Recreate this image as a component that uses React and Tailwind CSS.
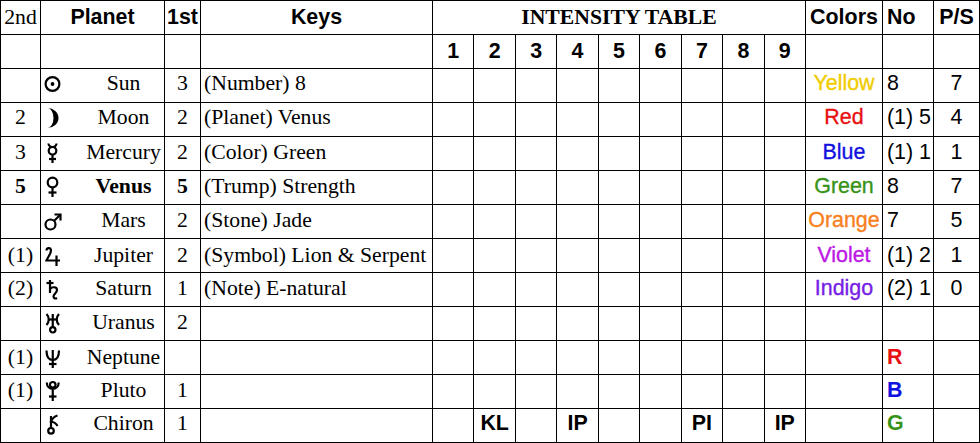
import React from "react";

const serif = "font-['Liberation_Serif','Times_New_Roman',serif] text-[21.7px]";
const sans = "font-['Liberation_Sans',Arial,sans-serif] text-[21.4px]";

const sw = 2.2;

function Glyph({ name }) {
  const common = { fill: "none", stroke: "black", strokeWidth: sw };
  let content = null;
  switch (name) {
    case "sun":
      content = (
        <>
          <circle cx="9.5" cy="11" r="6.9" {...common} />
          <circle cx="9.5" cy="11" r="1.9" fill="black" />
        </>
      );
      break;
    case "moon":
      content = <path d="M4.5 1 A11 10 0 0 1 4.5 21 A6 10 0 0 0 4.5 1 Z" fill="black" />;
      break;
    case "mercury":
      content = (
        <g {...common}>
          <path d="M5.5 1.5 A4 3.5 0 0 0 13.5 1.5" />
          <circle cx="9.5" cy="8.8" r="3.8" />
          <path d="M9.5 12.6 V21" />
          <path d="M6 17 H13" />
        </g>
      );
      break;
    case "venus":
      content = (
        <g {...common}>
          <circle cx="9.5" cy="6.5" r="4.8" />
          <path d="M9.5 11.3 V21" />
          <path d="M5.5 16.5 H13.5" />
        </g>
      );
      break;
    case "mars":
      content = (
        <g {...common}>
          <circle cx="7.5" cy="14.5" r="5" />
          <path d="M11 11 L17 5" />
          <path d="M11.5 4.5 H17.5 V10.5" />
        </g>
      );
      break;
    case "jupiter":
      content = (
        <g {...common}>
          <path d="M3.5 5.5 C3.5 2.5 8 2 8 5.5 C8 8.5 5 12 3.5 15.5 H17" />
          <path d="M13.5 10.5 V21" />
        </g>
      );
      break;
    case "saturn":
      content = (
        <g {...common}>
          <path d="M7 2 V15" />
          <path d="M3.5 5 H10.5" />
          <path d="M7 11 C9 8.5 14 8.5 14 12 C14 15 10.5 16 10.5 18.5 C10.5 20.5 12.5 21 14 20" />
        </g>
      );
      break;
    case "uranus":
      content = (
        <g {...common}>
          <path d="M3.5 2 C6.5 5 6.5 10 3.5 13" />
          <path d="M16 2 C13 5 13 10 16 13" />
          <path d="M5.5 7.5 H14" />
          <path d="M9.75 2 V15" />
          <circle cx="9.75" cy="17.8" r="2.7" />
        </g>
      );
      break;
    case "neptune":
      content = (
        <g {...common}>
          <path d="M3.5 3.5 C3.5 11 6 13 9.75 13 C13.5 13 16 11 16 3.5" />
          <path d="M9.75 3 V21" />
          <path d="M6 17 H13.5" />
        </g>
      );
      break;
    case "pluto":
      content = (
        <g {...common}>
          <circle cx="9.75" cy="4.8" r="2.8" />
          <path d="M3.8 2.5 C3.8 11 15.7 11 15.7 2.5" />
          <path d="M9.75 10 V21" />
          <path d="M6 16.5 H13.5" />
        </g>
      );
      break;
    case "chiron":
      content = (
        <g {...common}>
          <path d="M8 3 V14.5" />
          <path d="M14.5 2.5 C11 3.5 9 6 8 8.5 C11 9 13.5 11 14.5 13" />
          <circle cx="8" cy="17.8" r="2.8" />
        </g>
      );
      break;
    default:
      content = null;
  }
  return (
    <svg width="20" height="22" viewBox="0 0 20 22">
      {content}
    </svg>
  );
}

const rows = [
  { s: "", g: "sun", n: "Sun", f: "3", k: "(Number) 8", c: "Yellow", cc: "text-[#f0cc00]", no: "8", ps: "7", pad: "pb-[3px]" },
  { s: "2", g: "moon", n: "Moon", f: "2", k: "(Planet) Venus", c: "Red", cc: "text-[#e81010]", no: "(1) 5", ps: "4", pad: "pb-[3px]" },
  { s: "3", g: "mercury", n: "Mercury", f: "2", k: "(Color) Green", c: "Blue", cc: "text-[#1010e0]", no: "(1) 1", ps: "1", pad: "pb-[2px]" },
  { s: "5", g: "venus", n: "Venus", f: "5", k: "(Trump) Strength", c: "Green", cc: "text-[#379318]", no: "8", ps: "7", b: true, pad: "pb-[2px]" },
  { s: "", g: "mars", n: "Mars", f: "2", k: "(Stone) Jade", c: "Orange", cc: "text-[#f7801c]", no: "7", ps: "5", pad: "pb-[2px]" },
  { s: "(1)", g: "jupiter", n: "Jupiter", f: "2", k: "(Symbol) Lion & Serpent", c: "Violet", cc: "text-[#bc18e4]", no: "(1) 2", ps: "1", pad: "pt-[1px]" },
  { s: "(2)", g: "saturn", n: "Saturn", f: "1", k: "(Note) E-natural", c: "Indigo", cc: "text-[#771ee4]", no: "(2) 1", ps: "0", pad: "pb-[1px]" },
  { s: "", g: "uranus", n: "Uranus", f: "2", k: "", c: "", cc: "", no: "", ps: "", pad: "pb-[1px]" },
  { s: "(1)", g: "neptune", n: "Neptune", f: "", k: "", c: "", cc: "", no: "R", noc: "text-[#e81010] font-bold", ps: "", pad: "pt-[1px]" },
  { s: "(1)", g: "pluto", n: "Pluto", f: "1", k: "", c: "", cc: "", no: "B", noc: "text-[#1010e0] font-bold", ps: "", pad: "pb-[2px]" },
  { s: "", g: "chiron", n: "Chiron", f: "1", k: "", c: "", cc: "", no: "G", noc: "text-[#379318] font-bold", ps: "", marks: { 2: "KL", 4: "IP", 7: "PI", 9: "IP" }, pad: "pb-[4px]" },
];

const cell = "bg-white flex items-center leading-none";

export default function App() {
  const nums = [1, 2, 3, 4, 5, 6, 7, 8, 9];
  return (
    <div className="w-[980px] h-[443px] bg-white text-black">
      <div className="grid w-[980px] bg-black p-px gap-px grid-cols-[39px_123px_35px_231px_repeat(9,1fr)_76px_50px_45px] grid-rows-[repeat(13,33px)]">
        {/* header row */}
        <div className={`${cell} ${serif} justify-center`}>2nd</div>
        <div className={`${cell} ${sans} font-bold justify-center`}>Planet</div>
        <div className={`${cell} ${sans} font-bold justify-center`}>1st</div>
        <div className={`${cell} ${sans} font-bold justify-center`}>Keys</div>
        <div className={`${cell} ${serif} font-bold justify-center col-span-9`}>INTENSITY TABLE</div>
        <div className={`${cell} ${sans} font-bold justify-center`}>Colors</div>
        <div className={`${cell} ${sans} font-bold pl-[4px]`}>No</div>
        <div className={`${cell} ${sans} font-bold justify-center`}>P/S</div>

        {/* number row */}
        <div className={cell}></div>
        <div className={cell}></div>
        <div className={cell}></div>
        <div className={cell}></div>
        {nums.map((n) => (
          <div key={n} className={`${cell} ${sans} font-bold justify-center`}>{n}</div>
        ))}
        <div className={cell}></div>
        <div className={cell}></div>
        <div className={cell}></div>

        {rows.map((r, i) => (
          <React.Fragment key={i}>
            <div className={`${cell} ${r.pad} ${serif} justify-center ${r.b ? "font-bold" : ""}`}>{r.s}</div>
            <div className={`${cell} ${r.pad} ${serif}`}>
              <span className="w-[20px] ml-[2px] flex items-center justify-center">
                <Glyph name={r.g} />
              </span>
              <span className={`flex-1 text-center pl-[20px] ${r.b ? "font-bold" : ""}`}>{r.n}</span>
            </div>
            <div className={`${cell} ${r.pad} ${serif} justify-center ${r.b ? "font-bold" : ""}`}>{r.f}</div>
            <div className={`${cell} ${r.pad} ${serif} pl-[3px] whitespace-nowrap`}>{r.k}</div>
            {nums.map((n) => (
              <div key={n} className={`${cell} ${r.pad} ${sans} font-bold justify-center`}>
                {r.marks && r.marks[n] ? r.marks[n] : ""}
              </div>
            ))}
            <div className={`${cell} ${r.pad} ${sans} justify-center [-webkit-text-stroke:0.35px] ${r.cc}`}>{r.c}</div>
            <div className={`${cell} ${r.pad} ${sans} pl-[4px] whitespace-nowrap ${r.noc || ""}`}>{r.no}</div>
            <div className={`${cell} ${r.pad} ${sans} justify-center`}>{r.ps}</div>
          </React.Fragment>
        ))}
      </div>
    </div>
  );
}
